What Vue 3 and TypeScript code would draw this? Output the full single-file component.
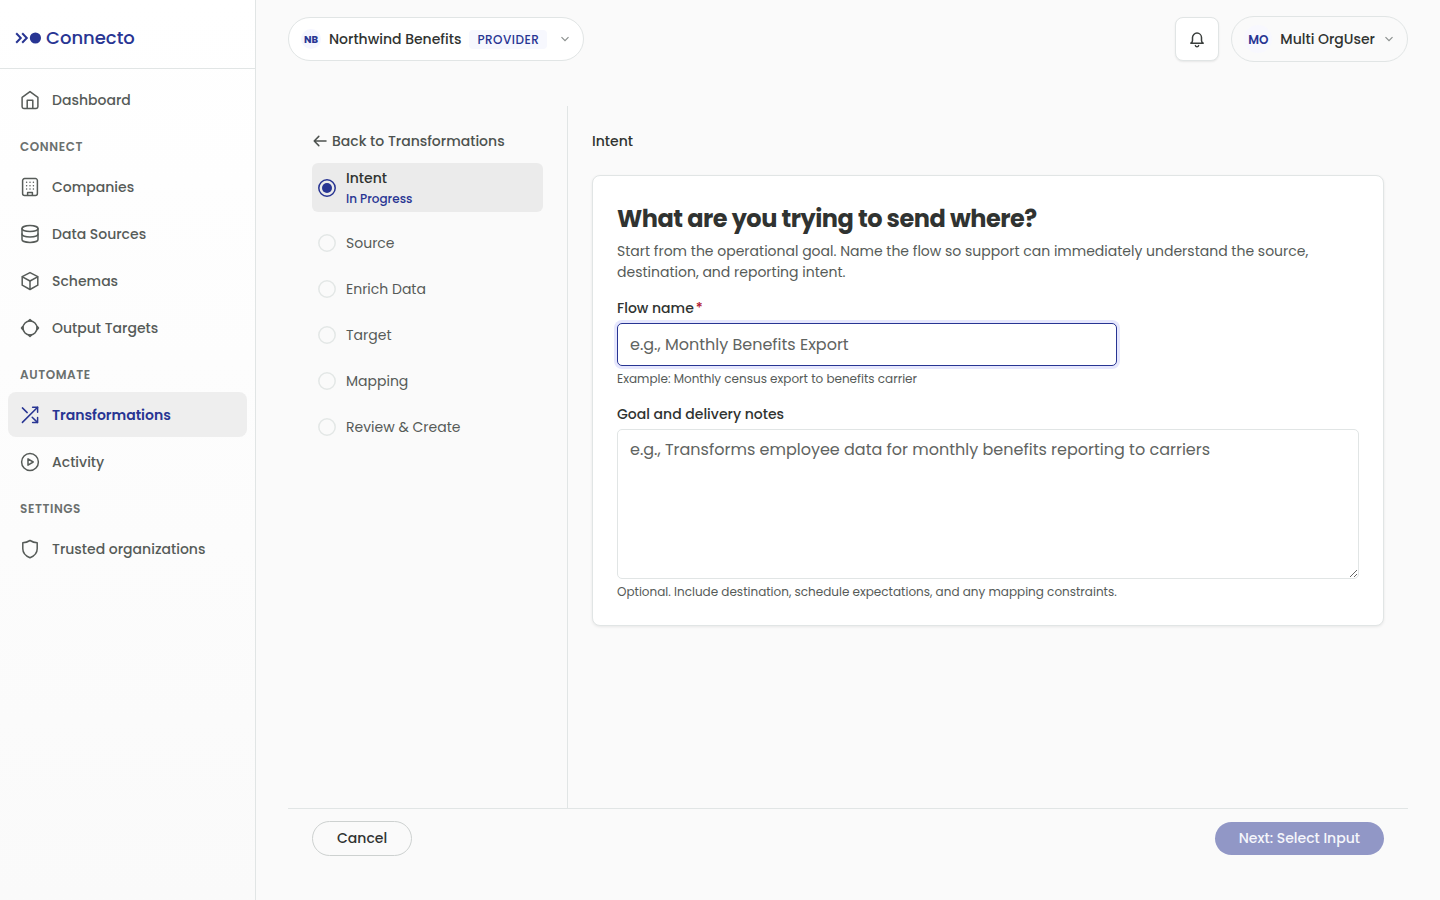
<script setup lang="ts">
import { ref } from 'vue'

type IconName = 'home' | 'building' | 'database' | 'cube' | 'target' | 'shuffle' | 'play' | 'shield'

interface NavItem {
  label: string
  icon: IconName
  active?: boolean
}

interface NavSection {
  title?: string
  items: NavItem[]
}

interface Step {
  label: string
  status?: string
}

const sections: NavSection[] = [
  { items: [{ label: 'Dashboard', icon: 'home' }] },
  {
    title: 'Connect',
    items: [
      { label: 'Companies', icon: 'building' },
      { label: 'Data Sources', icon: 'database' },
      { label: 'Schemas', icon: 'cube' },
      { label: 'Output Targets', icon: 'target' },
    ],
  },
  {
    title: 'Automate',
    items: [
      { label: 'Transformations', icon: 'shuffle', active: true },
      { label: 'Activity', icon: 'play' },
    ],
  },
  { title: 'Settings', items: [{ label: 'Trusted organizations', icon: 'shield' }] },
]

const icons: Record<IconName, string[]> = {
  home: ['M2.1 7.4 10 1.6l7.9 5.8v9.300a1.700 1.700 0 0 1-1.700 1.700H3.800a1.700 1.700 0 0 1-1.700-1.700Z', 'M7.200 18.200V10.200h5.600v8'],
  building: [
    'M4.600 1.600h10.800a2 2 0 0 1 2 2v12.900a2 2 0 0 1-2 2H4.600a2 2 0 0 1-2-2V3.600a2 2 0 0 1 2-2Z',
    'M7.600 18.300v-2.800h4.800v2.800',
    'M6.600 5.300h.01M10 5.300h.01M13.400 5.300h.01M6.600 8.700h.01M10 8.700h.01M13.400 8.700h.01M6.600 12.100h.01M10 12.100h.01M13.400 12.100h.01',
  ],
  database: [
    'M2 4.600C2 2.900 5.600 1.600 10 1.600s8 1.300 8 3-3.600 3-8 3-8-1.300-8-3Z',
    'M2 4.600v10.800c0 1.700 3.600 3 8 3s8-1.300 8-3V4.600',
    'M2 10c0 1.700 3.600 3 8 3s8-1.300 8-3',
  ],
  cube: ['M10 1.600 17.800 5.600V14.200L10 18.500 2.200 14.200V5.600Z', 'M2.400 5.800 10 10l7.600-4.200', 'M10 10v8.300'],
  target: [
    'M10 3a7 7 0 1 1 0 14 7 7 0 0 1 0-14Z',
    'M8.600 2.700 10 1.500l1.400 1.200ZM8.600 17.300l1.400 1.200 1.400-1.200ZM2.700 8.600 1.500 10l1.200 1.400ZM17.300 8.600l1.200 1.400-1.200 1.400Z',
  ],
  shuffle: ['M2.400 17.400 17.600 2.200', 'M12.600 2.200h5v5', 'M2.400 2.900 7.200 7.600', 'M12.200 12.200l5.200 5.200', 'M17.600 12.400v5h-5'],
  play: ['M10 1.600a8.400 8.400 0 1 1 0 16.800 8.400 8.400 0 0 1 0-16.800Z', 'M8 6.800v6.400l5.200-3.200Z'],
  shield: ['M10 1.500c2.300 1.400 4.700 2.100 7.200 2.200v6c0 4.400-2.800 7.200-7.200 9-4.400-1.800-7.200-4.600-7.200-9v-6C5.300 3.600 7.700 2.900 10 1.500Z'],
}

const steps: Step[] = [
  { label: 'Intent', status: 'In Progress' },
  { label: 'Source' },
  { label: 'Enrich Data' },
  { label: 'Target' },
  { label: 'Mapping' },
  { label: 'Review & Create' },
]

const flowName = ref('')
const notes = ref('')
</script>

<template>
  <div class="app">
    <aside class="sidebar">
      <a class="brand" href="#">
        <svg class="brand-mark" width="26" height="14" viewBox="0 0 26 14" aria-hidden="true">
          <path d="M1.200 2.200 5.800 7 1.200 11.800M7.200 2.200 11.800 7 7.200 11.800" fill="none" stroke="currentColor" stroke-width="2" />
          <circle cx="20.400" cy="7" r="5.600" fill="currentColor" />
        </svg>
        <span>Connecto</span>
      </a>
      <nav class="nav" aria-label="Main">
        <template v-for="(section, i) in sections" :key="i">
          <h2 v-if="section.title" class="nav-title">{{ section.title }}</h2>
          <a
            v-for="item in section.items"
            :key="item.label"
            href="#"
            class="nav-item"
            :class="{ active: item.active }"
            :aria-current="item.active ? 'page' : undefined"
          >
            <svg width="20" height="20" viewBox="0 0 20 20" class="icon" aria-hidden="true">
              <path v-for="d in icons[item.icon]" :key="d" :d="d" />
            </svg>
            <span>{{ item.label }}</span>
          </a>
        </template>
      </nav>
    </aside>

    <div class="main">
      <header class="topbar">
        <button type="button" class="org">
          <span class="avatar small">NB</span>
          <span>Northwind Benefits</span>
          <span class="badge">PROVIDER</span>
          <svg class="chevron" width="10" height="10" viewBox="0 0 10 10" aria-hidden="true"><path d="M1.500 3.200 5 6.700 8.500 3.200" /></svg>
        </button>
        <div class="topbar-right">
          <button type="button" class="bell" aria-label="Notifications">
            <svg width="18" height="18" viewBox="0 0 18 18" class="icon" aria-hidden="true">
              <path d="M2.800 13.200h12.400c-1-.6-1.700-1.400-1.700-2.800V7.600a4.500 4.500 0 0 0-9 0v2.800c0 1.400-.7 2.200-1.700 2.800Z" />
              <path d="M7.400 15.600c.4 1.400 2.800 1.400 3.200 0" />
            </svg>
          </button>
          <button type="button" class="user">
            <span class="avatar">MO</span>
            <span>Multi OrgUser</span>
            <svg class="chevron" width="10" height="10" viewBox="0 0 10 10" aria-hidden="true"><path d="M1.500 3.200 5 6.700 8.500 3.200" /></svg>
          </button>
        </div>
      </header>

      <main class="wizard">
        <section class="steps">
          <a href="#" class="back">
            <svg width="16" height="16" viewBox="0 0 16 16" class="icon" aria-hidden="true">
              <path d="M14 8H2.200M6.800 3.400 2.200 8l4.600 4.600" />
            </svg>
            <span>Back to Transformations</span>
          </a>
          <ol class="step-list">
            <li v-for="step in steps" :key="step.label">
              <button type="button" class="step" :class="{ current: step.status }" :aria-current="step.status ? 'step' : undefined">
                <svg class="dot" width="18" height="18" viewBox="0 0 18 18" aria-hidden="true">
                  <circle class="ring" cx="9" cy="9" r="8.200" />
                  <circle v-if="step.status" class="core" cx="9" cy="9" r="5" />
                </svg>
                <span class="step-text">
                  <span>{{ step.label }}</span>
                  <span v-if="step.status" class="step-status">{{ step.status }}</span>
                </span>
              </button>
            </li>
          </ol>
        </section>

        <section class="content">
          <h1 class="content-title">Intent</h1>
          <form id="intent-form" class="card" @submit.prevent>
            <h2 class="card-title">What are you trying to send where?</h2>
            <p class="lead">
              Start from the operational goal. Name the flow so support can immediately understand the source,
              destination, and reporting intent.
            </p>
            <div class="fields">
              <div class="field">
                <label for="flow-name">Flow name<span class="required">*</span></label>
                <input id="flow-name" v-model="flowName" class="control focused" type="text" required placeholder="e.g., Monthly Benefits Export" />
                <p class="hint">Example: Monthly census export to benefits carrier</p>
              </div>
              <div class="field">
                <label for="notes">Goal and delivery notes</label>
                <textarea
                  id="notes"
                  v-model="notes"
                  class="control area"
                  placeholder="e.g., Transforms employee data for monthly benefits reporting to carriers"
                ></textarea>
                <p class="hint">Optional. Include destination, schedule expectations, and any mapping constraints.</p>
              </div>
            </div>
          </form>
        </section>
      </main>

      <footer class="footer">
        <button type="button" class="btn cancel">Cancel</button>
        <button type="submit" form="intent-form" class="btn next" disabled>Next: Select Input</button>
      </footer>
    </div>
  </div>
</template>

<style>
body {
  margin: 0;
  background: #fafafa;
}
</style>

<style scoped>
.app {
  display: flex;
  min-height: 100vh;
  background: #fafafa;
  color: #303331;
  font-family: Poppins, Inter, 'Open Sans', sans-serif;
  font-size: 14px;
  line-height: 21px;
}
.app *,
.app {
  box-sizing: border-box;
}
h1,
h2,
p,
ol {
  margin: 0;
  padding: 0;
}
button,
input,
textarea {
  margin: 0;
  font: inherit;
  color: inherit;
}
a {
  color: inherit;
  text-decoration: none;
}
.icon {
  flex: none;
  fill: none;
  stroke: currentColor;
  stroke-width: 1.5;
  stroke-linecap: round;
  stroke-linejoin: round;
}

.sidebar {
  flex: none;
  width: 256px;
  border-right: 1px solid #e1e5e5;
  background: linear-gradient(#ffffff, #fafafa);
}
.brand {
  display: flex;
  align-items: center;
  gap: 5px;
  height: 69px;
  padding: 8px 15px 0;
  border-bottom: 1px solid #e1e5e5;
  color: #283593;
  font-size: 18px;
  font-weight: 500;
  line-height: 20px;
}
.nav {
  display: flex;
  flex-direction: column;
  gap: 2px;
  padding: 8px;
}
.nav-title {
  padding: 15px 12px 7px;
  color: #6b706e;
  font-size: 12px;
  font-weight: 600;
  line-height: 16px;
  letter-spacing: 0.05em;
  text-transform: uppercase;
}
.nav-item {
  display: flex;
  align-items: center;
  gap: 12px;
  padding: 12px 12px 11px;
  border-radius: 8px;
  color: #565b58;
  font-weight: 500;
  line-height: 22px;
}
.nav-item.active {
  background: #eeeeee;
  color: #283593;
  font-weight: 600;
}

.main {
  display: flex;
  flex: 1;
  flex-direction: column;
  min-width: 0;
  padding: 0 32px 32px;
}
.topbar {
  display: flex;
  align-items: center;
  justify-content: space-between;
  height: 78px;
  margin-bottom: 28px;
}
.topbar-right {
  display: flex;
  align-items: center;
  gap: 12px;
}
.org,
.user,
.bell {
  display: flex;
  align-items: center;
  gap: 8px;
  border: 1px solid #e1e5e5;
  border-radius: 23px;
  background: #ffffff;
  font-weight: 500;
}
.org {
  height: 44px;
  padding: 0 13px 0 12px;
}
.user {
  height: 46px;
  padding: 0 13px 0 12px;
  background: #fafafa;
}
.bell {
  justify-content: center;
  width: 44px;
  height: 44px;
  padding: 0;
  border-radius: 8px;
  color: #3a3e3c;
  box-shadow: 0 1px 2px rgb(0 0 0 / 8%);
}
.avatar {
  display: flex;
  align-items: center;
  justify-content: center;
  width: 28px;
  height: 28px;
  border-radius: 50%;
  background: #f8f8fe;
  color: #283593;
  font-size: 12px;
  font-weight: 600;
}
.avatar.small {
  width: 20px;
  height: 20px;
  background: #f5f6ff;
  font-size: 10px;
  font-weight: 700;
}
.badge {
  padding: 0 8px;
  border-radius: 4px;
  background: #f7f8fe;
  color: #283593;
  font-size: 12px;
  line-height: 19px;
  letter-spacing: 0.04em;
}
.chevron {
  margin-left: 1px;
  fill: none;
  stroke: #8b908e;
  stroke-width: 1.2;
}
.org .chevron {
  margin-left: 5px;
}

.wizard {
  display: flex;
  flex: 1;
}
.steps {
  flex: none;
  width: 280px;
  padding: 24px;
  border-right: 1px solid #e1e5e5;
}
.back {
  display: flex;
  align-items: center;
  gap: 4px;
  margin-bottom: 11px;
  color: #4d524f;
  font-weight: 500;
  line-height: 22px;
}
.step-list {
  display: flex;
  flex-direction: column;
  gap: 16px;
  list-style: none;
}
.step {
  display: flex;
  align-items: center;
  gap: 10px;
  width: 100%;
  min-height: 30px;
  padding: 4px 6px;
  border: 0;
  border-radius: 6px;
  background: none;
  color: #565b58;
  text-align: left;
}
.step.current {
  padding: 4px 6px 3px;
  background: #ebebeb;
  color: #303331;
  font-weight: 500;
  line-height: 22px;
}
.dot {
  flex: none;
}
.ring {
  fill: none;
  stroke: #e3e7e6;
  stroke-width: 1.5;
}
.current .ring {
  stroke: #283593;
}
.core {
  fill: #283593;
}
.step-text {
  display: flex;
  flex-direction: column;
}
.step-status {
  color: #283593;
  font-size: 12px;
  line-height: 20px;
}

.content {
  flex: 1;
  min-width: 0;
  padding: 24px;
}
.content-title {
  margin-bottom: 23px;
  font-size: 14px;
  font-weight: 500;
  line-height: 22px;
}
.card {
  padding: 24px;
  border: 1px solid #e1e5e5;
  border-radius: 8px;
  background: #ffffff;
  box-shadow: 0 1px 3px rgb(0 0 0 / 8%);
}
.card-title {
  margin-bottom: 3px;
  font-size: 24px;
  font-weight: 700;
  line-height: 38px;
  letter-spacing: -0.02em;
}
.lead {
  color: #565b58;
}
.fields {
  display: flex;
  flex-direction: column;
  gap: 16px;
  margin-top: 15px;
}
.field {
  display: flex;
  flex-direction: column;
  gap: 4px;
}
.field label {
  font-weight: 500;
}
.required {
  margin-left: 2px;
  color: #b0142e;
}
.control {
  width: 100%;
  padding: 8px 12px;
  border: 1px solid #e1e5e5;
  border-radius: 5px;
  outline: none;
  background: #ffffff;
  font-size: 16px;
  line-height: 24px;
}
.control::placeholder {
  color: #5f6461;
  opacity: 1;
}
.control.focused {
  max-width: 500px;
  height: 43px;
}
.control.focused,
.control:focus {
  border-color: #283593;
  box-shadow: 0 0 0 3px #e6e7fd;
}
.area {
  display: block;
  height: 150px;
  resize: vertical;
}
.hint {
  color: #565b58;
  font-size: 12px;
  line-height: 18px;
}

.footer {
  display: flex;
  align-items: center;
  justify-content: space-between;
  padding: 12px 24px;
  border-top: 1px solid #e1e5e5;
}
.btn {
  padding: 6px 24px;
  border: 0;
  border-radius: 18px;
  font-weight: 500;
}
.cancel {
  border: 1px solid #cdd1d0;
  background: #fafafa;
}
.next {
  background: #9197c6;
  color: #f5f6fb;
}
</style>
